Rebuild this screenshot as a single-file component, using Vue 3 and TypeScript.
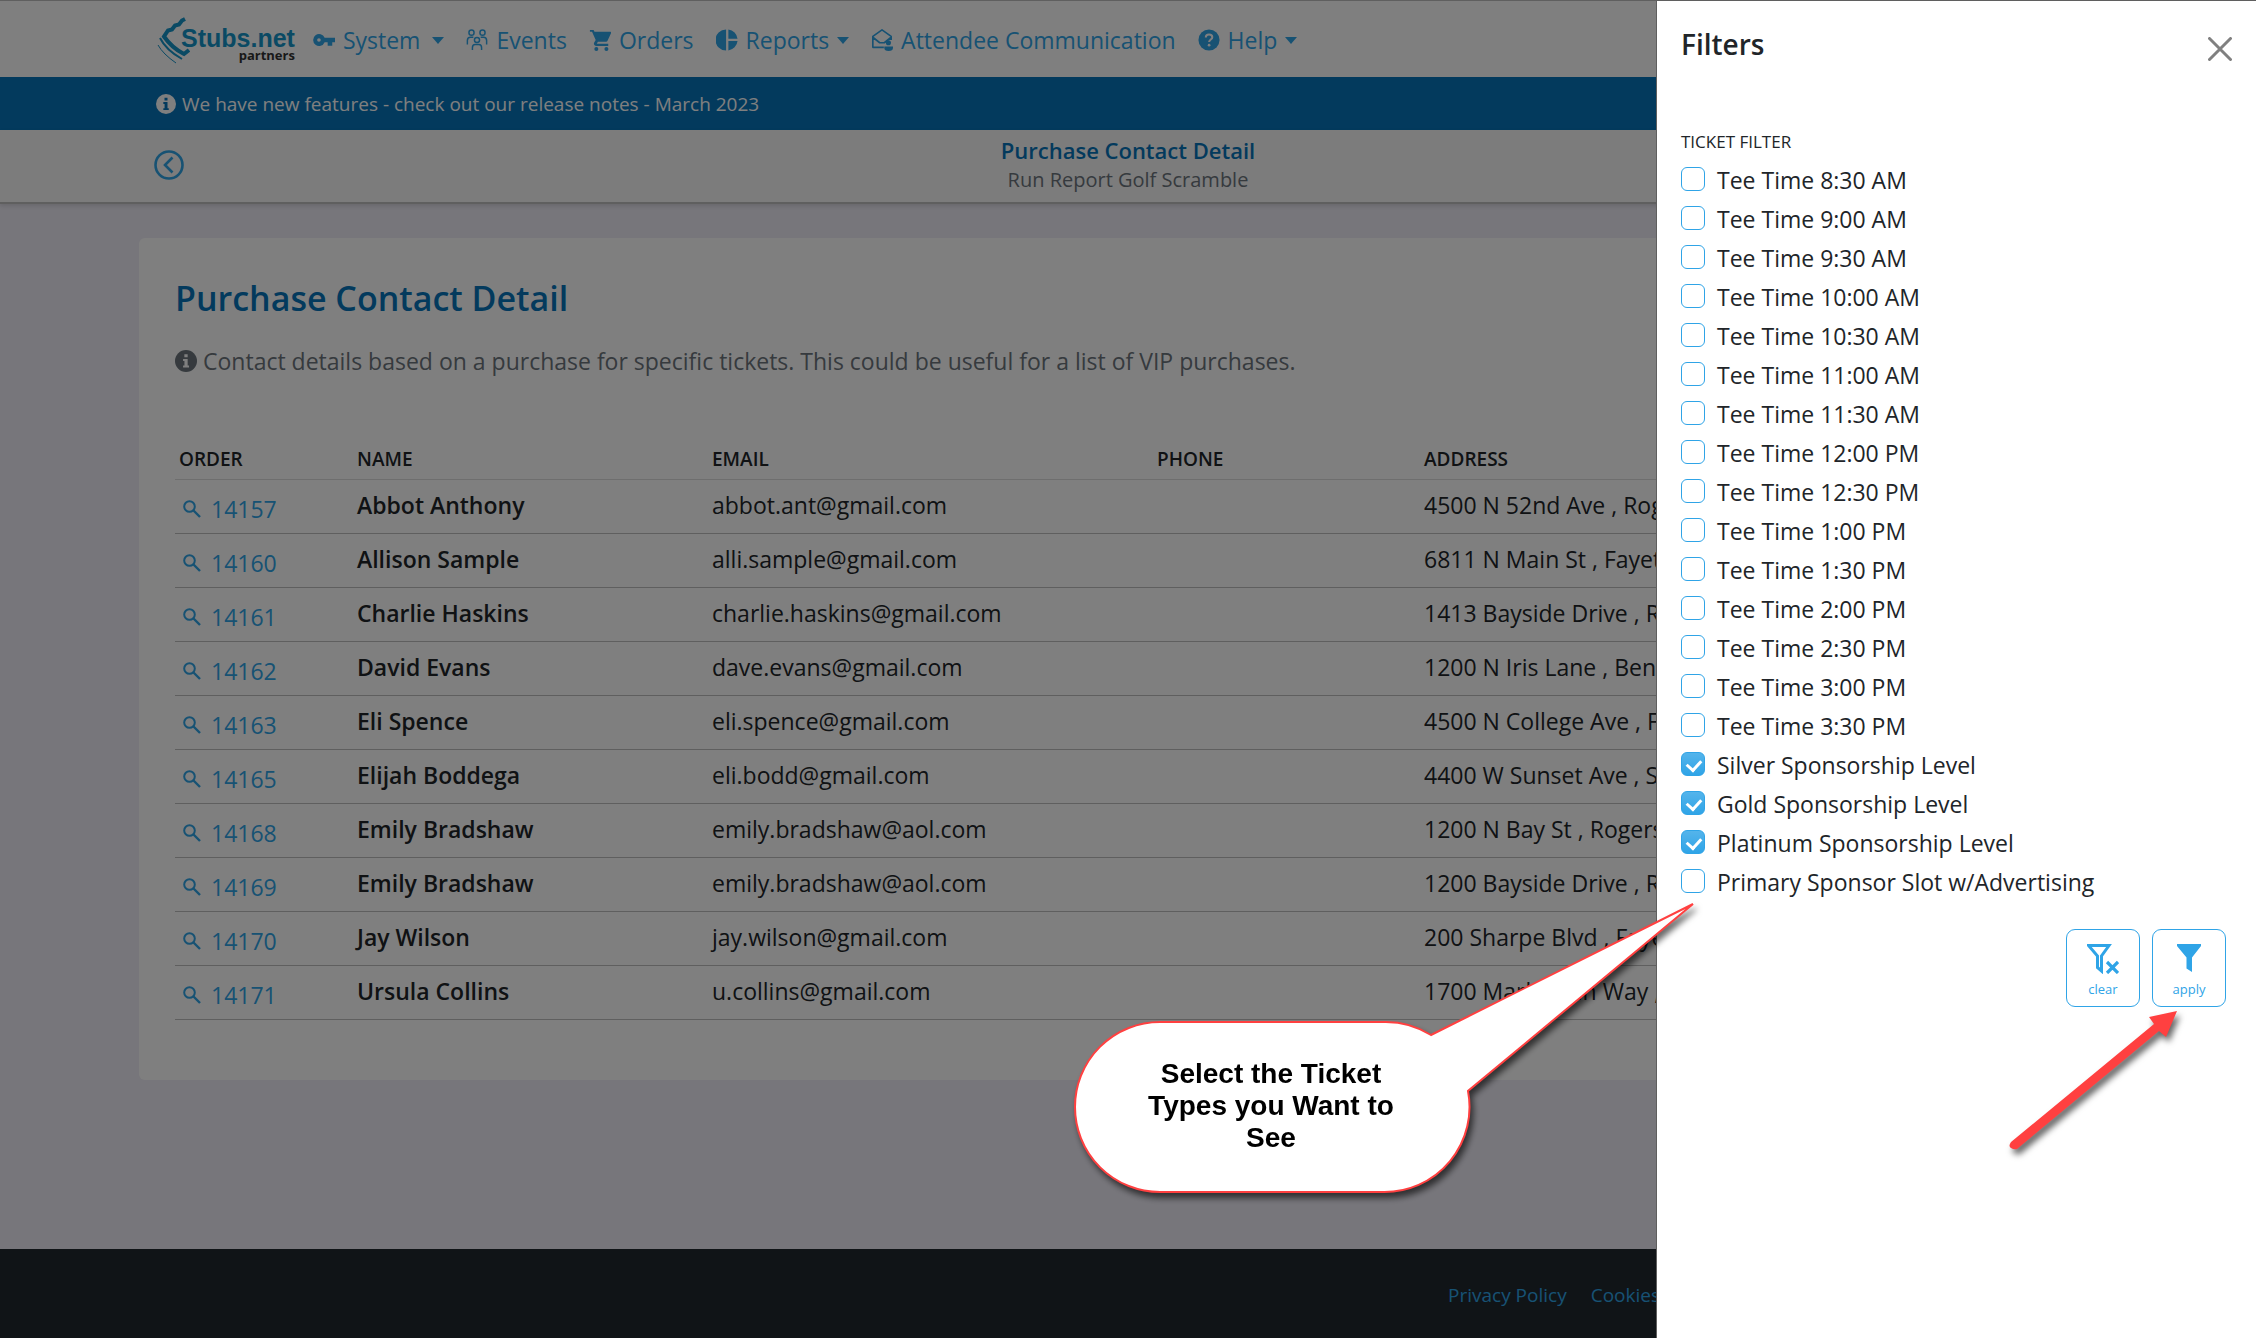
<script setup lang="ts">
import { ref } from 'vue'

interface NavItem {
  label: string
  icon: string
  menu: boolean
}

interface Purchase {
  order: number
  name: string
  email: string
  phone: string
  address: string
}

interface TicketFilter {
  label: string
  checked: boolean
}

const navItems: NavItem[] = [
  { label: 'System', icon: 'key', menu: true },
  { label: 'Events', icon: 'people', menu: false },
  { label: 'Orders', icon: 'cart', menu: false },
  { label: 'Reports', icon: 'pie', menu: true },
  { label: 'Attendee Communication', icon: 'mail', menu: false },
  { label: 'Help', icon: 'help', menu: true },
]

const purchases: Purchase[] = [
  { order: 14157, name: 'Abbot Anthony', email: 'abbot.ant@gmail.com', phone: '', address: '4500 N 52nd Ave , Rogers' },
  { order: 14160, name: 'Allison Sample', email: 'alli.sample@gmail.com', phone: '', address: '6811 N Main St , Fayetteville' },
  { order: 14161, name: 'Charlie Haskins', email: 'charlie.haskins@gmail.com', phone: '', address: '1413 Bayside Drive , Rogers' },
  { order: 14162, name: 'David Evans', email: 'dave.evans@gmail.com', phone: '', address: '1200 N Iris Lane , Bentonville' },
  { order: 14163, name: 'Eli Spence', email: 'eli.spence@gmail.com', phone: '', address: '4500 N College Ave , Fayetteville' },
  { order: 14165, name: 'Elijah Boddega', email: 'eli.bodd@gmail.com', phone: '', address: '4400 W Sunset Ave , Springdale' },
  { order: 14168, name: 'Emily Bradshaw', email: 'emily.bradshaw@aol.com', phone: '', address: '1200 N Bay St , Rogers' },
  { order: 14169, name: 'Emily Bradshaw', email: 'emily.bradshaw@aol.com', phone: '', address: '1200 Bayside Drive , Rogers' },
  { order: 14170, name: 'Jay Wilson', email: 'jay.wilson@gmail.com', phone: '', address: '200 Sharpe Blvd , Fayetteville' },
  { order: 14171, name: 'Ursula Collins', email: 'u.collins@gmail.com', phone: '', address: '1700 Marksman Way , Rogers' },
]

const filters = ref<TicketFilter[]>([
  ...[
    '8:30 AM', '9:00 AM', '9:30 AM', '10:00 AM', '10:30 AM', '11:00 AM', '11:30 AM',
    '12:00 PM', '12:30 PM', '1:00 PM', '1:30 PM', '2:00 PM', '2:30 PM', '3:00 PM', '3:30 PM',
  ].map((time) => ({ label: `Tee Time ${time}`, checked: false })),
  { label: 'Silver Sponsorship Level', checked: true },
  { label: 'Gold Sponsorship Level', checked: true },
  { label: 'Platinum Sponsorship Level', checked: true },
  { label: 'Primary Sponsor Slot w/Advertising', checked: false },
])

function clearFilters(): void {
  filters.value.forEach((filter) => (filter.checked = false))
}
</script>

<template>
  <div class="page">
    <header class="topbar">
      <a class="logo" href="#">
        <svg class="logo-mark" viewBox="0 0 34 48" aria-hidden="true">
          <path d="M29 3 26 4.500l-3 4-4 1-3 4-4 1-4 6Q16 32 28 38l5-4" fill="none" stroke="#1494c8" stroke-width="4" />
          <path d="M4 22Q10 34 26 43" fill="none" stroke="#1494c8" stroke-width="2" />
          <path d="M2 29Q7 38 20 47" fill="none" stroke="#1494c8" stroke-width="1" />
        </svg>
        <span class="logo-text">
          <span class="logo-name">Stubs.net</span>
          <span class="logo-sub">partners</span>
        </span>
      </a>
      <nav class="nav">
        <a v-for="item in navItems" :key="item.label" class="nav-item" :class="`nav-${item.icon}`" href="#">
          <svg class="nav-icon" viewBox="0 0 24 24" aria-hidden="true">
            <path
              v-if="item.icon === 'key'"
              fill="currentColor"
              fill-rule="evenodd"
              d="M12.700 9.600a6.500 6.500 0 1 0 0 4.800H16v4h5v-4h3V9.600zM6.500 10a2 2 0 1 1 0 4 2 2 0 0 1 0-4z"
            />
            <g v-else-if="item.icon === 'people'" fill="none" stroke="currentColor" stroke-width="1.600">
              <circle cx="6" cy="4" r="2.800" />
              <circle cx="18" cy="4" r="2.800" />
              <circle cx="12" cy="12" r="2.800" />
              <path d="M1.500 17v-4.500Q1.500 9 5 9h3M22.500 17v-4.500Q22.500 9 19 9h-3M7 23v-2.500Q7 17 10 17h4q3 0 3 3.500V23" />
            </g>
            <path
              v-else-if="item.icon === 'cart'"
              fill="currentColor"
              d="M1 1v2h2.300l4 9-1.600 2.800C4.700 16.500 6 18.500 8 18.500h13v-2.300H8.500l1.200-2.200h8.500c.9 0 1.600-.5 2-1.200L24 4.500c.4-.8-.1-1.500-1-1.500H6L5 1zM8 19.500a2.200 2.200 0 1 0 0 4.400 2.200 2.200 0 0 0 0-4.400zm11 0a2.200 2.200 0 1 0 0 4.400 2.200 2.200 0 0 0 0-4.400z"
            />
            <path
              v-else-if="item.icon === 'pie'"
              fill="currentColor"
              d="M11 .5v23A11.500 11.500 0 0 1 11 .5zM13.500.5A11.500 11.500 0 0 1 23.500 10.700h-10zM13.500 13.200h10a11.500 11.500 0 0 1-10 10.200z"
            />
            <g v-else-if="item.icon === 'mail'">
              <path
                fill="none"
                stroke="currentColor"
                stroke-width="1.800"
                stroke-linejoin="round"
                d="M14 20H2V8l10-7 10 7v4M2 9l7.500 6h5L22 9"
              />
              <circle cx="19" cy="15" r="2.800" fill="currentColor" />
              <path fill="currentColor" d="M14.500 19h9.500v1.500q0 3.500-4.800 3.500t-4.700-3.500z" />
            </g>
            <g v-else>
              <circle cx="12" cy="12" r="11.500" fill="currentColor" />
              <path
                fill="none"
                stroke="#fff"
                stroke-width="2.200"
                d="M8.500 9.200C8.500 7 10 5.900 12 5.900s3.600 1.200 3.600 3c0 2.600-3.500 2.600-3.500 5.400"
              />
              <circle cx="12.100" cy="17.700" r="1.500" fill="#fff" />
            </g>
          </svg>
          <span>{{ item.label }}</span>
          <span v-if="item.menu" class="caret"></span>
        </a>
      </nav>
    </header>

    <div class="notice">
      <svg class="notice-icon" viewBox="0 0 24 24" aria-hidden="true">
        <circle cx="12" cy="12" r="12" fill="#fff" />
        <path fill="#0674ba" d="M10.200 4.500h3.600v3.300h-3.600zM8.800 9.700h5V17h1.500v2.200H8.800V17h1.500v-5.100H8.800z" />
      </svg>
      <span>We have new features - check out our release notes - March 2023</span>
    </div>

    <div class="subbar">
      <a class="back" href="#" aria-label="Back">
        <svg viewBox="0 0 30 30" aria-hidden="true">
          <circle cx="15" cy="15" r="13.500" fill="none" stroke="currentColor" stroke-width="2.600" />
          <path d="M18.500 7.500 11 15l7.500 7.500" fill="none" stroke="currentColor" stroke-width="2.600" />
        </svg>
      </a>
      <div class="subbar-title">
        <strong>Purchase Contact Detail</strong>
        <span>Run Report Golf Scramble</span>
      </div>
    </div>

    <main class="main">
      <section class="card">
        <h1>Purchase Contact Detail</h1>
        <p class="hint">
          <svg class="hint-icon" viewBox="0 0 24 24" aria-hidden="true">
            <circle cx="12" cy="12" r="12" fill="#6c757d" />
            <path fill="#fff" d="M10.200 4.500h3.600v3.300h-3.600zM8.800 9.700h5V17h1.500v2.200H8.800V17h1.500v-5.100H8.800z" />
          </svg>
          <span>Contact details based on a purchase for specific tickets. This could be useful for a list of VIP purchases.</span>
        </p>
        <table class="table">
          <colgroup>
            <col class="col-order" />
            <col class="col-name" />
            <col class="col-email" />
            <col class="col-phone" />
            <col />
          </colgroup>
          <thead>
            <tr>
              <th>ORDER</th>
              <th>NAME</th>
              <th>EMAIL</th>
              <th>PHONE</th>
              <th>ADDRESS</th>
            </tr>
          </thead>
          <tbody>
            <tr v-for="row in purchases" :key="row.order">
              <td>
                <a class="order" href="#">
                  <svg viewBox="0 0 18 18" aria-hidden="true">
                    <circle cx="6.500" cy="6.500" r="5.300" fill="none" stroke="currentColor" stroke-width="2" />
                    <path d="m10.500 10.500 6.500 6.500" stroke="currentColor" stroke-width="2.400" />
                  </svg>
                  <span>{{ row.order }}</span>
                </a>
              </td>
              <td class="name">{{ row.name }}</td>
              <td>{{ row.email }}</td>
              <td>{{ row.phone }}</td>
              <td>{{ row.address }}</td>
            </tr>
          </tbody>
        </table>
      </section>
    </main>

    <footer class="footer">
      <a href="#">Privacy Policy</a>
      <a href="#">Cookies</a>
    </footer>
  </div>

  <div class="backdrop"></div>

  <aside class="panel">
    <div class="panel-head">
      <h2>Filters</h2>
      <button class="close" type="button" aria-label="Close">
        <svg viewBox="0 0 24 24" aria-hidden="true">
          <path d="M1.500 1.500 22.500 22.500M22.500 1.500 1.500 22.500" stroke="#808080" stroke-width="3" stroke-linecap="round" />
        </svg>
      </button>
    </div>
    <form class="filters" @submit.prevent>
      <p class="filters-title">TICKET FILTER</p>
      <label v-for="filter in filters" :key="filter.label" class="check">
        <input v-model="filter.checked" type="checkbox" />
        <span>{{ filter.label }}</span>
      </label>
      <div class="actions">
        <button class="action" type="button" @click="clearFilters">
          <svg viewBox="0 0 32 32" aria-hidden="true">
            <path
              d="M1.500 3.500h20.500L14.500 14v15l-4-3.500V14z"
              fill="none"
              stroke="currentColor"
              stroke-width="3"
            />
            <path d="m20 20 11 11m0-11L20 31" stroke="currentColor" stroke-width="3.200" />
          </svg>
          <span>clear</span>
        </button>
        <button class="action" type="submit">
          <svg viewBox="0 0 32 32" aria-hidden="true">
            <path d="M4 2h24v2l-9 11.500V30l-5.500-3.500v-11L4 4z" fill="currentColor" />
          </svg>
          <span>apply</span>
        </button>
      </div>
    </form>

    <div class="callout">
      <svg viewBox="0 0 630 300" aria-hidden="true">
        <path
          d="M90 122H314A85 85 0 0 1 361 135L623 4 398 191A85 85 0 0 1 314 292H90A85 85 0 0 1 90 122Z"
          fill="#fff"
          stroke="#ff4040"
          stroke-width="2"
        />
      </svg>
      <p>Select the Ticket<br />Types you Want to<br />See</p>
    </div>

    <svg class="arrow" viewBox="0 0 180 150" aria-hidden="true">
      <path
        d="M170 5 142 11l5 7L4 136q-3 4 0 6t6 1L152 25l7 6z"
        fill="#ff4040"
      />
    </svg>
  </aside>
</template>

<style>
body {
  margin: 0;
}
</style>

<style scoped>
* {
  box-sizing: border-box;
}

.page,
.panel {
  font-family: 'Open Sans', 'Noto Sans', sans-serif;
  font-size: 23px;
  line-height: 36px;
  color: #212529;
}

.page {
  display: flex;
  flex-direction: column;
  min-height: 100vh;
  background: #eeecf6;
  border-top: 1px solid #bebebe;
}

a {
  color: #2fa4e7;
  text-decoration: none;
}

button {
  font-family: inherit;
  cursor: pointer;
}

.topbar {
  display: flex;
  align-items: center;
  gap: 18px;
  height: 76px;
  padding: 2px 156px 0;
  background: #fff;
}

.logo {
  display: flex;
  align-items: flex-start;
}

.logo-mark {
  width: 34px;
  height: 48px;
}

.logo-text {
  display: flex;
  flex-direction: column;
  align-items: flex-end;
  margin-left: -9px;
  padding-top: 10px;
}

.logo-name {
  font: bold 25px/24px 'Liberation Sans', sans-serif;
  color: #1494c8;
}

.logo-sub {
  font-size: 13px;
  font-weight: 700;
  line-height: 10px;
  color: #333;
}

.nav {
  display: flex;
  align-items: center;
  gap: 22px;
}

.nav-item {
  display: flex;
  align-items: center;
  gap: 8px;
  white-space: nowrap;
}

.nav-icon {
  width: 22px;
  height: 22px;
}

.caret {
  border: 6px solid transparent;
  border-top: 7px solid currentColor;
  border-bottom: 0;
}

.nav-key .caret {
  margin-left: 4px;
}

.notice {
  display: flex;
  align-items: center;
  gap: 6px;
  height: 53px;
  padding: 0 156px;
  font-size: 19px;
  color: #fff;
  background: #0674ba;
}

.notice-icon {
  width: 20px;
  height: 20px;
}

.subbar {
  display: flex;
  align-items: center;
  height: 74px;
  padding: 0 154px 2px;
  background: #f8f8f8;
  border-bottom: 2px solid #bebebe;
  box-shadow: 0 2px 4px rgba(0, 0, 0, 0.12);
}

.back {
  display: flex;
  width: 30px;
}

.back svg {
  width: 30px;
  height: 30px;
}

.subbar-title {
  display: flex;
  flex: 1;
  flex-direction: column;
  align-items: center;
  margin-right: 30px;
  line-height: 29px;
}

.subbar-title strong {
  font-size: 22px;
  font-weight: 600;
  color: #0674ba;
}

.subbar-title span {
  font-size: 20px;
  color: #6c757d;
}

.main {
  flex: 1;
  padding: 34px 139px 48px;
}

.card {
  padding: 36px 36px 60px;
  background: #fff;
  border-radius: 6px;
}

h1 {
  margin: 0;
  font-size: 34px;
  font-weight: 600;
  line-height: 48px;
  color: #0674ba;
}

.hint {
  display: flex;
  align-items: center;
  gap: 6px;
  margin: 21px 0 0;
  color: #6c757d;
}

.hint-icon {
  width: 22px;
  height: 22px;
}

.table {
  width: 100%;
  margin-top: 60px;
  table-layout: fixed;
  border-collapse: collapse;
  color: #212529;
}

.col-order {
  width: 178px;
}

.col-name {
  width: 355px;
}

.col-email {
  width: 445px;
}

.col-phone {
  width: 267px;
}

th {
  height: 40px;
  padding: 0 4px;
  font-size: 19px;
  font-weight: 600;
  line-height: 36px;
  text-align: left;
  border-bottom: 1px solid #dcdcdc;
}

td {
  height: 54px;
  padding: 0 4px 2px;
  white-space: nowrap;
  border-bottom: 1px solid #bebebe;
}

.name {
  font-weight: 600;
}

.order {
  display: flex;
  align-items: center;
  gap: 10px;
  padding: 8px 0 0 4px;
}

.order svg {
  width: 18px;
  height: 18px;
}

.footer {
  display: flex;
  align-items: center;
  gap: 24px;
  height: 89px;
  padding: 2px 0 0 calc(100% - 808px);
  font-size: 19px;
  background: #20282e;
}

.backdrop {
  position: fixed;
  inset: 0;
  background: rgba(0, 0, 0, 0.5);
}

.panel {
  position: fixed;
  top: 1px;
  right: 0;
  bottom: 0;
  width: 600px;
  background: #fff;
  border-left: 1px solid #5f5f5f;
}

.panel-head {
  display: flex;
  align-items: center;
  justify-content: space-between;
  padding: 24px;
}

h2 {
  margin: 0;
  font-size: 28px;
  font-weight: 600;
  line-height: 38px;
}

.close {
  display: flex;
  padding: 10px 0 0;
  background: none;
  border: 0;
}

.close svg {
  width: 24px;
  height: 24px;
}

.filters {
  padding: 38px 24px 0;
}

.filters-title {
  margin: 0;
  font-size: 17px;
  line-height: 34px;
}

.check {
  display: flex;
  align-items: center;
  gap: 12px;
  height: 39px;
}

.check span {
  padding-top: 2px;
}

.check input {
  position: relative;
  flex: none;
  width: 24px;
  height: 24px;
  margin: 0;
  appearance: none;
  background: #fff;
  border: 1px solid #2fa4e7;
  border-radius: 6px;
}

.check input:checked {
  background: linear-gradient(#54b4eb, #2fa4e7);
}

.check input:checked::after {
  position: absolute;
  top: 4px;
  left: 7px;
  width: 7px;
  height: 11px;
  content: '';
  border: solid #fff;
  border-width: 0 3px 3px 0;
  transform: rotate(42deg);
}

.actions {
  display: flex;
  gap: 12px;
  justify-content: flex-end;
  padding: 29px 6px 0 0;
}

.action {
  display: flex;
  flex-direction: column;
  align-items: center;
  gap: 6px;
  width: 74px;
  height: 78px;
  padding: 12px 0 0;
  font-size: 13px;
  line-height: 18px;
  color: #2fa4e7;
  background: #fff;
  border: 1px solid #2fa4e7;
  border-radius: 9px;
}

.action svg {
  width: 32px;
  height: 32px;
}

.callout {
  position: absolute;
  top: 899px;
  left: -587px;
  width: 630px;
  height: 300px;
  pointer-events: none;
}

.callout svg {
  position: absolute;
  inset: 0;
  width: 100%;
  height: 100%;
  filter: drop-shadow(3px 5px 3px rgba(0, 0, 0, 0.6));
}

.callout p {
  position: absolute;
  top: 158px;
  left: 4px;
  width: 394px;
  margin: 0;
  font: bold 28px/32px 'Liberation Sans', sans-serif;
  color: #000;
  text-align: center;
}

.arrow {
  position: absolute;
  top: 1005px;
  left: 350px;
  width: 180px;
  height: 150px;
  overflow: visible;
  pointer-events: none;
  filter: drop-shadow(3px 5px 3px rgba(0, 0, 0, 0.6));
}
</style>
